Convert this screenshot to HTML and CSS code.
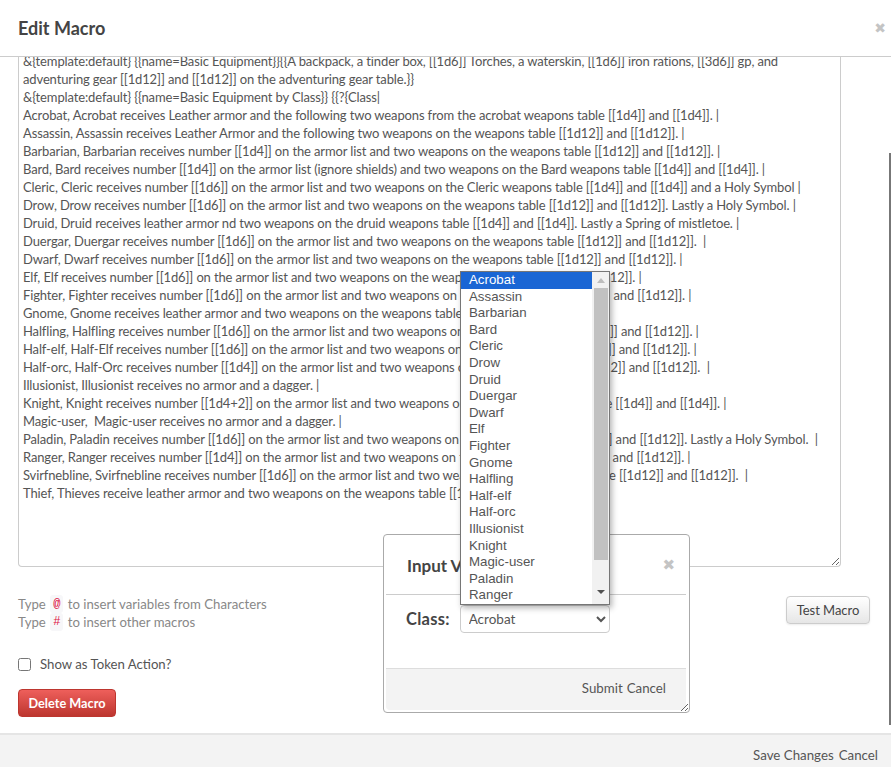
FILE: index.html
```html
<!DOCTYPE html>
<html lang="en">
<head>
<meta charset="utf-8">
<title>Edit Macro</title>
<link rel="stylesheet" href="styles.css">
</head>
<body>
<div class="modal">
  <header class="modal-head">
    <h1>Edit Macro</h1>
    <span class="close">✖</span>
  </header>
  <main class="modal-body">
    <div class="editor">
      <div class="editor-text">
        <div>&amp;{template:default} {{name=Basic Equipment}}{{A backpack, a tinder box, [[1d6]] Torches, a waterskin, [[1d6]] iron rations, [[3d6]] gp, and</div>
        <div>adventuring gear [[1d12]] and [[1d12]] on the adventuring gear table.}}</div>
        <div>&amp;{template:default} {{name=Basic Equipment by Class}} {{?{Class|</div>
        <div>Acrobat, Acrobat receives Leather armor and the following two weapons from the acrobat weapons table [[1d4]] and [[1d4]]. |</div>
        <div>Assassin, Assassin receives Leather Armor and the following two weapons on the weapons table [[1d12]] and [[1d12]]. |</div>
        <div>Barbarian, Barbarian receives number [[1d4]] on the armor list and two weapons on the weapons table [[1d12]] and [[1d12]]. |</div>
        <div>Bard, Bard receives number [[1d4]] on the armor list (ignore shields) and two weapons on the Bard weapons table [[1d4]] and [[1d4]]. |</div>
        <div>Cleric, Cleric receives number [[1d6]] on the armor list and two weapons on the Cleric weapons table [[1d4]] and [[1d4]] and a Holy Symbol |</div>
        <div>Drow, Drow receives number [[1d6]] on the armor list and two weapons on the weapons table [[1d12]] and [[1d12]]. Lastly a Holy Symbol. |</div>
        <div>Druid, Druid receives leather armor nd two weapons on the druid weapons table [[1d4]] and [[1d4]]. Lastly a Spring of mistletoe. |</div>
        <div>Duergar, Duergar receives number [[1d6]] on the armor list and two weapons on the weapons table [[1d12]] and [[1d12]].&nbsp; |</div>
        <div>Dwarf, Dwarf receives number [[1d6]] on the armor list and two weapons on the weapons table [[1d12]] and [[1d12]]. |</div>
        <div>Elf, Elf receives number [[1d6]] on the armor list and two weapons on the weapons table [[1d12]] and [[1d12]]. |</div>
        <div>Fighter, Fighter receives number [[1d6]] on the armor list and two weapons on the weapons table [[1d12]] and [[1d12]]. |</div>
        <div>Gnome, Gnome receives leather armor and two weapons on the weapons table [[1d12]] and [[1d12]]. |</div>
        <div>Halfling, Halfling receives number [[1d6]] on the armor list and two weapons on the weapons table [[1d12]] and [[1d12]]. |</div>
        <div>Half-elf, Half-Elf receives number [[1d6]] on the armor list and two weapons on the weapons table [[1d12]] and [[1d12]]. |</div>
        <div>Half-orc, Half-Orc receives number [[1d4]] on the armor list and two weapons on the weapons table [[1d12]] and [[1d12]].&nbsp; |</div>
        <div>Illusionist, Illusionist receives no armor and a dagger. |</div>
        <div>Knight, Knight receives number [[1d4+2]] on the armor list and two weapons on the Knight weapons table [[1d4]] and [[1d4]]. |</div>
        <div>Magic-user,&nbsp; Magic-user receives no armor and a dagger. |</div>
        <div>Paladin, Paladin receives number [[1d6]] on the armor list and two weapons on the weapons table [[1d12]] and [[1d12]]. Lastly a Holy Symbol.&nbsp; |</div>
        <div>Ranger, Ranger receives number [[1d4]] on the armor list and two weapons on the weapons table [[1d12]] and [[1d12]]. |</div>
        <div>Svirfnebline, Svirfnebline receives number [[1d6]] on the armor list and two weapons on the weapons table [[1d12]] and [[1d12]].&nbsp; |</div>
        <div>Thief, Thieves receive leather armor and two weapons on the weapons table [[1d12]] and [[1d12]].}}</div>
      </div>
    </div>
    <div class="tools">
      <div class="hints">
        <div class="hint">Type <code>@</code> to insert variables from Characters</div>
        <div class="hint">Type <code>#</code> to insert other macros</div>
      </div>
      <button class="btn" type="button">Test Macro</button>
    </div>
    <label class="token"><input type="checkbox"><span>Show as Token Action?</span></label>
    <button class="btn-danger" type="button">Delete Macro</button>
  </main>
  <footer class="modal-foot">
    <span>Save Changes</span><span>Cancel</span>
  </footer>
</div>
<div class="page-scroll"></div>

<section class="dialog">
  <header class="dialog-head">
    <h2>Input Value</h2>
    <span class="close dialog-close">✖</span>
  </header>
  <div class="dialog-body">
    <span class="field-label">Class:</span>
    <select class="field-select"><option>Acrobat</option></select>
  </div>
  <footer class="dialog-foot">
    <span>Submit</span><span>Cancel</span>
  </footer>
</section>

<div class="dropdown">
  <ul class="options">
    <li class="selected">Acrobat</li>
    <li>Assassin</li>
    <li>Barbarian</li>
    <li>Bard</li>
    <li>Cleric</li>
    <li>Drow</li>
    <li>Druid</li>
    <li>Duergar</li>
    <li>Dwarf</li>
    <li>Elf</li>
    <li>Fighter</li>
    <li>Gnome</li>
    <li>Halfling</li>
    <li>Half-elf</li>
    <li>Half-orc</li>
    <li>Illusionist</li>
    <li>Knight</li>
    <li>Magic-user</li>
    <li>Paladin</li>
    <li>Ranger</li>
  </ul>
  <div class="scrollbar">
    <span class="arrow arrow-up"></span>
    <span class="thumb"></span>
    <span class="arrow arrow-down"></span>
  </div>
</div>
</body>
</html>
```
FILE: styles.css
```css
* { box-sizing: border-box; }
html, body { margin: 0; height: 100%; overflow: hidden; background: #fff; }
body { font-family: Lato, "Liberation Sans", sans-serif; font-size: 13px; color: #555; }

.modal { display: flex; flex-direction: column; width: 891px; height: 767px; }
.modal-head { flex: 0 0 57px; display: flex; justify-content: space-between; align-items: center; padding: 0 5px 0 18px; border-bottom: 1px solid #ccc; }
.modal-head h1 { margin: 0; font-size: 18px; font-weight: 700; color: #444; }
.close { color: #c4c4c4; font-size: 14px; font-family: "DejaVu Sans", sans-serif; font-weight: 700; }

.modal-body { flex: 1; padding: 0 21px 0 18px; overflow: hidden; }
.editor { width: 823px; height: 510px; border: 1px solid #ccc; border-top: 0; border-radius: 0 0 4px 4px; padding: 0 4px; overflow: hidden; resize: both; line-height: 18px; color: #555; }
.editor-text { margin-top: -5px; white-space: nowrap; font-size: 13px; letter-spacing: -.13px; }

.tools { display: flex; justify-content: space-between; align-items: flex-start; margin-top: 29px; }
.hints { margin-top: -1px; color: #888; font-size: 13.2px; }
.hint { height: 18px; line-height: 18px; }
code { display: inline-block; padding: 0 3px; margin: 0 1px; height: 18px; vertical-align: top; font-family: "Liberation Mono", monospace; font-size: 12px; line-height: 18px; color: #d14; background: #f7f7f9; border-radius: 3px; }
.btn { width: 84px; height: 28px; margin: 0; padding: 0; font: inherit; font-size: 13px; letter-spacing: -.05px; color: #444; background: linear-gradient(#fff, #e6e6e6); border: 1px solid #ccc; border-radius: 4px; box-shadow: 0 1px 2px rgba(0,0,0,.08); }

.token { display: flex; align-items: center; margin-top: 23px; height: 20px; font-size: 13.2px; color: #555; }
.token input { width: 13px; height: 13px; margin: 0 9px 0 0; }
.btn-danger { display: block; width: 98px; height: 28px; margin-top: 15px; padding: 0; font: inherit; font-size: 12.7px; color: #fff; font-weight: 700; background: linear-gradient(#ee5f5b, #bd362f); border: 1px solid #bd362f; border-radius: 4px; }

.modal-foot { flex: 0 0 34px; display: flex; justify-content: flex-end; align-items: center; gap: 5px; padding: 7px 13px 0 0; background: #f3f3f3; border-top: 2px solid #e5e5e5; font-size: 13.3px; color: #555; }
.page-scroll { position: absolute; left: 889px; top: 153px; width: 2px; height: 572px; background: #777; }

.dialog { position: absolute; left: 383px; top: 534px; width: 307px; height: 179px; display: flex; flex-direction: column; background: #fff; border: 1px solid #aaa; border-radius: 4px; padding: 0 3px 2px 2px; resize: both; overflow: hidden; }
.dialog-head { flex: 0 0 60px; display: flex; justify-content: space-between; align-items: center; padding: 1px 11px 0 21px; border-bottom: 1px solid #ccc; }
.dialog-head h2 { margin: 0; font-size: 17px; font-weight: 700; color: #444; }
.dialog-close { font-size: 15px; }
.dialog-body { flex: 1; display: flex; align-items: flex-start; gap: 10px; padding: 10px 0 0 20px; }
.field-label { font-weight: 700; font-size: 16.5px; letter-spacing: .25px; line-height: 28px; color: #444; }
.field-select { width: 150px; height: 28px; padding: 0 4px; font-family: Lato, sans-serif; font-size: 13.5px; color: #555; background: #fff; border: 1px solid #ccc; border-radius: 4px; }
.dialog-foot { flex: 0 0 42px; display: flex; justify-content: flex-end; align-items: center; gap: 4px; padding: 0 20px 4px 0; background: #f3f3f3; border-top: 1px solid #ddd; border-radius: 0 0 4px 4px; font-size: 13.3px; }

.dropdown { position: absolute; left: 460px; top: 271px; width: 150px; height: 334px; display: flex; background: #fff; border: 1px solid #767676; box-shadow: 2px 3px 6px rgba(0,0,0,.3); }
.options { flex: 1; margin: 0; padding: 0; list-style: none; font-family: "Liberation Sans", Arial, sans-serif; font-size: 13.3px; color: #555; }
.options li { height: 16.6px; line-height: 16.6px; padding-left: 8px; }
.options .selected { background: #1a66d4; color: #fff; }
.scrollbar { flex: 0 0 17px; display: flex; flex-direction: column; align-items: center; background: #f1f1f1; }
.thumb { width: 14px; height: 272px; background: #c1c1c1; }
.arrow { flex: 0 0 auto; width: 0; height: 0; border-left: 4px solid transparent; border-right: 4px solid transparent; }
.arrow-up { margin: 6px 0 5px; border-bottom: 5px solid #bdbdbd; }
.arrow-down { margin: 30px 0 0; border-top: 4px solid #505050; }
```
